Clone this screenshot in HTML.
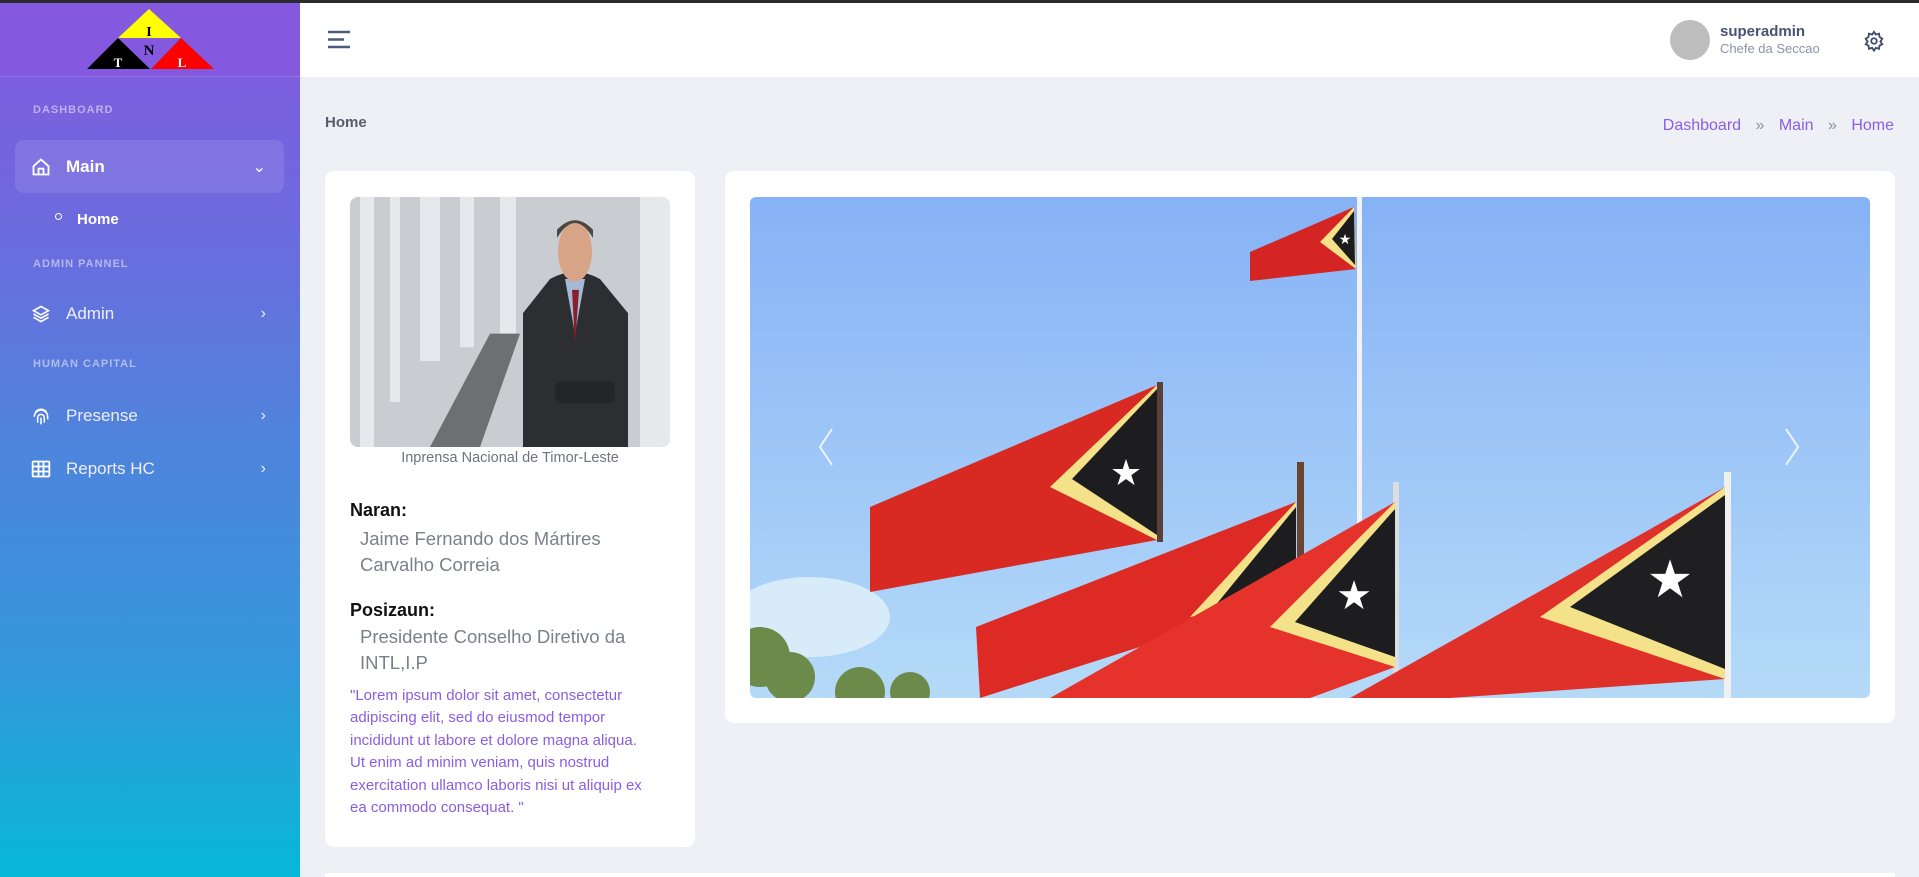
<!DOCTYPE html>
<html><head><meta charset="utf-8"><style>
*{box-sizing:border-box;margin:0;padding:0}
body{width:1919px;height:877px;overflow:hidden;background:#eff0f5;font-family:"Liberation Sans",sans-serif;position:relative}
.topbar{position:absolute;left:0;top:0;width:1919px;height:3px;background:#2b2b2e}
.side{position:absolute;left:0;top:3px;width:300px;height:874px;background:linear-gradient(180deg,#8459df 0%,#6d6ade 25%,#4f84dc 50%,#3596db 75%,#07b8d9 100%)}
.logo{height:74px;background:#8459df;border-bottom:1px solid rgba(255,255,255,.15);position:relative}
.lbl{position:absolute;left:33px;font-size:11px;font-weight:bold;letter-spacing:1px;color:rgba(255,255,255,.5)}
.item{position:absolute;left:15px;width:269px;height:53px;color:#fff;font-size:17px;font-weight:bold;display:flex;align-items:center;padding-left:16px}
.item svg{margin-right:15px}
.item .chev{position:absolute;right:18px;font-weight:normal;font-size:16px}
.hdr{position:absolute;left:300px;top:3px;width:1619px;height:74px;background:#fff}
.card{position:absolute;background:#fff;border-radius:9px}
</style></head><body>
<div class="topbar"></div>
<div class="side">
 <div class="logo">
  <svg width="300" height="74" style="position:absolute;left:0;top:0">
   <polygon points="149,6 181,35 118,35" fill="#ffff00"/>
   <polygon points="118,35 87,66 150,66" fill="#000"/>
   <polygon points="181,35 151,66 214,66" fill="#ff0000"/>
   <text x="149" y="33" font-family="Liberation Serif" font-weight="bold" font-size="14" text-anchor="middle">I</text>
   <text x="149" y="52" font-family="Liberation Serif" font-weight="bold" font-size="15" text-anchor="middle">N</text>
   <text x="118" y="64" font-family="Liberation Serif" font-weight="bold" font-size="13" fill="#fff" text-anchor="middle">T</text>
   <text x="182" y="64" font-family="Liberation Serif" font-weight="bold" font-size="13" fill="#fff" text-anchor="middle">L</text>
  </svg>
 </div>
 <div class="lbl" style="top:101px">DASHBOARD</div>
 <div class="item" style="top:137px;background:rgba(255,255,255,.1);border-radius:9px">
  <svg width="20" height="20" viewBox="0 0 24 24" fill="none" stroke="#fff" stroke-width="2.2"><path d="M3 11l9-8 9 8v10H3z"/><path d="M9 21v-7h6v7"/></svg>Main<span class="chev">⌄</span></div>
 <div style="position:absolute;left:55px;top:210px;width:7px;height:7px;border:1.5px solid #fff;border-radius:50%"></div>
 <div style="position:absolute;left:77px;top:208px;color:#fff;font-weight:bold;font-size:15px">Home</div>
 <div class="lbl" style="top:255px">ADMIN PANNEL</div>
 <div class="item" style="top:284px;font-weight:normal;color:#eef">
  <svg width="20" height="20" viewBox="0 0 24 24" fill="none" stroke="#fff" stroke-width="2"><path d="M12 3l9 5-9 5-9-5z"/><path d="M3 12l9 5 9-5"/><path d="M3 16l9 5 9-5"/></svg>Admin<span class="chev">›</span></div>
 <div class="lbl" style="top:355px">HUMAN CAPITAL</div>
 <div class="item" style="top:386px;font-weight:normal;color:#eef">
  <svg width="20" height="20" viewBox="0 0 24 24" fill="none" stroke="#fff" stroke-width="1.8"><path d="M5 8a8 8 0 0114 0M4 13a8 8 0 0116 0v3M8 20v-6a4 4 0 018 0v6M12 14v8"/></svg>Presense<span class="chev">›</span></div>
 <div class="item" style="top:439px;font-weight:normal;color:#eef">
  <svg width="20" height="20" viewBox="0 0 24 24" fill="none" stroke="#fff" stroke-width="2.2"><rect x="2" y="3" width="20" height="18" rx="1"/><path d="M2 9h20M2 15h20M9 3v18M15 3v18"/></svg>Reports HC<span class="chev">›</span></div>
</div>
<div class="hdr">
 <svg style="position:absolute;left:28px;top:27px" width="22" height="19"><path d="M0 2h22M0 9.5h16M0 17h22" stroke="#4d5a7a" stroke-width="2.4"/></svg>
 <div style="position:absolute;left:1370px;top:17px;width:40px;height:40px;border-radius:50%;background:#bdbdbd"></div>
 <div style="position:absolute;left:1420px;top:20px;font-size:15px;font-weight:bold;color:#495474">superadmin</div>
 <div style="position:absolute;left:1420px;top:38px;font-size:13px;color:#8a93a8">Chefe da Seccao</div>
 <svg style="position:absolute;left:1563px;top:27px" width="22" height="22" viewBox="0 0 24 24" fill="none" stroke="#3e4a6a" stroke-width="2"><circle cx="12" cy="12" r="3"/><path d="M12 2l2 3 3.5-1 .5 3.5 3 2-2 3 2 3-3 1.5-.5 3.5-3.5-1-2 3-2-3-3.5 1-.5-3.5-3-1.5 2-3-2-3 3-2 .5-3.5 3.5 1z"/></svg>
</div>
<div style="position:absolute;left:325px;top:114px;font-size:15px;font-weight:bold;color:#555c6b">Home</div>
<div style="position:absolute;right:25px;top:117px;font-size:16px;color:#8a5ee0">Dashboard <span style="color:#8a8fa0;margin:0 10px">»</span> Main <span style="color:#8a8fa0;margin:0 10px">»</span> Home</div>

<div class="card" style="left:325px;top:171px;width:370px;height:676px">
 <svg style="position:absolute;left:25px;top:26px;border-radius:8px" width="320" height="250" viewBox="0 0 320 183" preserveAspectRatio="none">
  <rect width="320" height="183" fill="#c9ccd0"/>
  <g fill="#e6e9ec"><rect x="10" y="0" width="14" height="183"/><rect x="40" y="0" width="10" height="150"/><rect x="70" y="0" width="20" height="120"/><rect x="110" y="0" width="14" height="110"/><rect x="150" y="0" width="16" height="100"/><rect x="290" y="0" width="30" height="183"/></g>
  <polygon points="80,183 140,100 170,100 130,183" fill="#6d7070"/>
  <path d="M200 60 q25-10 50 0 l28 25 v98 h-105 v-98z" fill="#2d2e31"/>
  <path d="M215 60 l10 40 l10-40z" fill="#a3b9d6"/><path d="M222 68 l3 40 l4-40z" fill="#8a1e2a"/>
  <ellipse cx="225" cy="40" rx="17" ry="22" fill="#d8a488"/><path d="M207 30 q18-22 36 0 v-6 q-18-14-36 0z" fill="#4c4640"/>
  <rect x="205" y="135" width="60" height="16" rx="6" fill="#242527"/>
 </svg>
 <div style="position:absolute;left:0;width:370px;top:279px;text-align:center;font-size:14.5px;color:#6e7380">Inprensa Nacional de Timor-Leste</div>
 <div style="position:absolute;left:25px;top:329px;font-size:18px;font-weight:bold;color:#111">Naran:</div>
 <div style="position:absolute;left:35px;top:355px;font-size:18.5px;line-height:26px;color:#7c808a;width:330px">Jaime Fernando dos Mártires<br>Carvalho Correia</div>
 <div style="position:absolute;left:25px;top:429px;font-size:18px;font-weight:bold;color:#111">Posizaun:</div>
 <div style="position:absolute;left:35px;top:453px;font-size:18.5px;line-height:26px;color:#7c808a">Presidente Conselho Diretivo da<br>INTL,I.P</div>
 <div style="position:absolute;left:25px;top:514px;white-space:nowrap;font-size:15px;line-height:22.4px;color:#8a5ee0">"Lorem ipsum dolor sit amet, consectetur<br>adipiscing elit, sed do eiusmod tempor<br>incididunt ut labore et dolore magna aliqua.<br>Ut enim ad minim veniam, quis nostrud<br>exercitation ullamco laboris nisi ut aliquip ex<br>ea commodo consequat. "</div>
</div>

<div class="card" style="left:725px;top:171px;width:1170px;height:552px">
 <svg style="position:absolute;left:25px;top:26px;border-radius:6px" width="1120" height="501" viewBox="0 0 1120 501">
  <defs><linearGradient id="sky" x1="0" y1="0" x2="0" y2="1"><stop offset="0" stop-color="#86b2f6"/><stop offset="1" stop-color="#b5daf8"/></linearGradient></defs>
  <rect width="1120" height="501" fill="url(#sky)"/>
  <ellipse cx="60" cy="420" rx="80" ry="40" fill="#d8ebf8"/>
  <g fill="#6c8a4a"><circle cx="10" cy="460" r="30"/><circle cx="40" cy="480" r="25"/><circle cx="110" cy="495" r="25"/><circle cx="160" cy="495" r="20"/></g>
  <rect x="607" y="0" width="5" height="330" fill="#f2f2f2"/>
  <rect x="407" y="185" width="6" height="160" fill="#5a4038"/>
  <rect x="547" y="265" width="7" height="236" fill="#6a4530"/>
  <rect x="643" y="285" width="6" height="216" fill="#ddd"/>
  <rect x="974" y="275" width="7" height="226" fill="#f0f0f0"/>
  <polygon points="500,55 604,10 606,72 500,84" fill="#d52424"/>
  <polygon points="604,10 606,72 570,45" fill="#f3e28a"/><polygon points="604,14 605,68 582,42" fill="#1c1c1c"/>
  <text x="595" y="47" font-size="14" fill="#fff" text-anchor="middle">★</text>
  <polygon points="120,310 407,188 407,343 120,395" fill="#d82a22"/>
  <polygon points="407,188 407,343 300,290" fill="#f3e28a"/><polygon points="407,192 407,338 322,282" fill="#1d1d1f"/>
  <text x="376" y="288" font-size="36" fill="#fff" text-anchor="middle">★</text>
  <polygon points="226,430 546,305 546,400 230,501" fill="#dd2a24"/>
  <polygon points="546,305 546,400 440,420" fill="#f3e28a"/><polygon points="546,310 546,392 460,415" fill="#1d1d1f"/>
  <polygon points="300,501 645,305 645,470 560,501" fill="#e5322a"/>
  <polygon points="645,305 645,470 520,430" fill="#f3e28a"/><polygon points="645,312 645,460 545,425" fill="#1d1d1f"/>
  <text x="604" y="412" font-size="40" fill="#fff" text-anchor="middle">★</text>
  <polygon points="600,501 975,290 975,482 700,501" fill="#e0302a"/>
  <polygon points="975,290 975,482 790,420" fill="#f3e28a"/><polygon points="975,298 975,472 820,410" fill="#1f1f22"/>
  <text x="920" y="400" font-size="52" fill="#fff" text-anchor="middle">★</text>
  <path d="M82 232 l-12 18 l12 18" stroke="#fff" stroke-width="2" fill="none" opacity=".8"/>
  <path d="M1036 232 l12 18 l-12 18" stroke="#fff" stroke-width="2" fill="none" opacity=".8"/>
 </svg>
</div>
<div style="position:absolute;left:325px;top:873px;width:1570px;height:4px;background:#fff"></div>
</body></html>
